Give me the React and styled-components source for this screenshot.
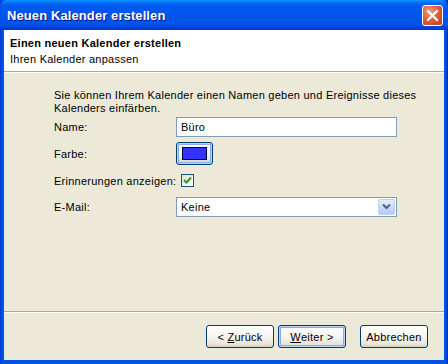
import styled, { createGlobalStyle } from "styled-components";

const GlobalStyle = createGlobalStyle`
    html, body {
        margin: 0;
        padding: 0;
        background: #0a246a;
    }
    * {
        box-sizing: border-box;
    }
`;

export default function App() {
    return (
        <Window>
            <GlobalStyle />
            <TitleBar>
                <Title>Neuen Kalender erstellen</Title>
                <CloseButton>
                    <svg width="13" height="13" viewBox="0 0 13 13">
                        <path d="M2 2 L11 11 M11 2 L2 11" stroke="#fff" strokeWidth="2.2" strokeLinecap="square" />
                    </svg>
                </CloseButton>
            </TitleBar>
            <Client>
                <Header>
                    <HeaderTitle>Einen neuen Kalender erstellen</HeaderTitle>
                    <HeaderSub>Ihren Kalender anpassen</HeaderSub>
                </Header>
                <Body>
                    <Description>
                        Sie können Ihrem Kalender einen Namen geben und Ereignisse dieses
                        <br />
                        Kalenders einfärben.
                    </Description>
                    <Form>
                        <Row $h={21}>
                            <Label>Name:</Label>
                            <TextInput>Büro</TextInput>
                        </Row>
                        <Row $h={23}>
                            <Label>Farbe:</Label>
                            <ColorButton>
                                <Swatch $color="#3333ff" />
                            </ColorButton>
                        </Row>
                        <Row $h={21}>
                            <Label>Erinnerungen anzeigen:</Label>
                            <CheckBox>
                                <svg width="9" height="9" viewBox="0 0 9 9">
                                    <path d="M1 4 L3.5 6.5 L8 1.5" stroke="#21a121" strokeWidth="2" fill="none" />
                                </svg>
                            </CheckBox>
                        </Row>
                        <Row $h={21}>
                            <Label>E-Mail:</Label>
                            <Select>
                                <span>Keine</span>
                                <DropButton>
                                    <svg width="9" height="7" viewBox="0 0 9 7">
                                        <path d="M1 1.5 L4.5 5 L8 1.5" stroke="#4d6185" strokeWidth="2" fill="none" />
                                    </svg>
                                </DropButton>
                            </Select>
                        </Row>
                    </Form>
                </Body>
                <Footer>
                    <Button>
                        {"< "}
                        <u>Z</u>urück
                    </Button>
                    <Button $default>
                        <u>W</u>eiter {">"}
                    </Button>
                    <Button $gap={14}>Abbrechen</Button>
                </Footer>
            </Client>
        </Window>
    );
}

const Window = styled.div`
    width: 448px;
    height: 364px;
    display: flex;
    flex-direction: column;
    background: linear-gradient(90deg, #0831d9 0, #0054e3 2px, #0054e3 446px, #001ea0 448px);
    font-family: Tahoma, "Liberation Sans", Arial, sans-serif;
    font-size: 11px;
    letter-spacing: 0.25px;
    color: #000;
    overflow: hidden;
`;

const TitleBar = styled.div`
    height: 30px;
    flex-shrink: 0;
    display: flex;
    align-items: center;
    justify-content: space-between;
    padding: 0 5px 0 7px;
    border-radius: 7px 7px 0 0;
    background: linear-gradient(
        180deg,
        #0997ff 0,
        #0a6af8 3px,
        #0058ee 6px,
        #0055eb 18px,
        #0053e6 24px,
        #0040d8 28px,
        #0036cc 30px
    );
`;

const Title = styled.div`
    font-family: "Trebuchet MS", "Liberation Sans", sans-serif;
    font-weight: bold;
    font-size: 13px;
    letter-spacing: 0.1px;
    color: #fff;
    text-shadow: 1px 1px 0 #0f1089;
    padding-top: 1px;
`;

const CloseButton = styled.div`
    width: 21px;
    height: 21px;
    display: flex;
    align-items: center;
    justify-content: center;
    border: 1px solid #fff;
    border-radius: 3px;
    background: radial-gradient(circle at 35% 30%, #f0a080 0, #e06040 45%, #c0391b 100%);
    margin-top: 1px;
`;

const Client = styled.div`
    flex: 1;
    display: flex;
    flex-direction: column;
    margin: 0 4px 4px 4px;
    background: #ece9d8;
`;

const Header = styled.div`
    height: 42px;
    flex-shrink: 0;
    background: #fff;
    padding: 5px 6px 0;
    border-bottom: 1px solid #aca899;
    box-shadow: 0 1px 0 #fff;
`;

const HeaderTitle = styled.div`
    font-weight: bold;
    line-height: 16px;
`;

const HeaderSub = styled.div`
    line-height: 16px;
`;

const Body = styled.div`
    flex: 1;
    padding: 17px 0 0 50px;
`;

const Description = styled.div`
    line-height: 13px;
    margin-bottom: 1px;
    white-space: nowrap;
`;

const Form = styled.div`
    display: flex;
    flex-direction: column;
    gap: 5px;
`;

const Row = styled.div`
    display: flex;
    align-items: center;
    height: ${(p) => p.$h}px;
`;

const Label = styled.div`
    width: 122px;
    flex-shrink: 0;
    white-space: nowrap;
`;

const TextInput = styled.div`
    width: 221px;
    height: 20px;
    border: 1px solid #7f9db9;
    background: #fff;
    padding: 0 4px;
    display: flex;
    align-items: center;
`;

const ColorButton = styled.div`
    width: 37px;
    height: 23px;
    border: 1px solid #003c74;
    border-radius: 3px;
    background: linear-gradient(180deg, #fff 0, #f4f3ee 60%, #d6d0c5 100%);
    box-shadow: inset 0 0 0 1px #bdd0f8, inset 0 0 0 2px #89adeb;
    display: flex;
    align-items: center;
    justify-content: center;
`;

const Swatch = styled.div`
    width: 25px;
    height: 13px;
    background: ${(p) => p.$color};
    border: 1px solid #000040;
`;

const CheckBox = styled.div`
    width: 13px;
    height: 13px;
    margin-left: 5px;
    border: 1px solid #1c5180;
    background: linear-gradient(135deg, #dcdcd7 0, #fff 100%);
    display: flex;
    align-items: center;
    justify-content: center;
`;

const Select = styled.div`
    width: 221px;
    height: 20px;
    border: 1px solid #7f9db9;
    background: #fff;
    padding: 0 1px 0 4px;
    display: flex;
    align-items: center;
    justify-content: space-between;
`;

const DropButton = styled.div`
    width: 17px;
    height: 16px;
    border-radius: 2px;
    border: 1px solid #bdd0f8;
    background: linear-gradient(180deg, #e6eefc 0, #c8d7f8 60%, #b4c8f5 100%);
    display: flex;
    align-items: center;
    justify-content: center;
`;

const Footer = styled.div`
    height: 49px;
    flex-shrink: 0;
    border-top: 1px solid #aca899;
    box-shadow: inset 0 1px 0 #fff;
    display: flex;
    justify-content: flex-end;
    align-items: flex-start;
    padding: 13px 16px 0 0;
`;

const Button = styled.div`
    width: 68px;
    height: 23px;
    margin-left: ${(p) => (p.$gap ? p.$gap : 4)}px;
    border: 1px solid #003c74;
    border-radius: 3px;
    background: linear-gradient(180deg, #fff 0, #f5f4ef 55%, #e8e5d9 85%, #d6d0c5 100%);
    box-shadow: ${(p) =>
        p.$default ? "inset 0 0 0 1px #c1d3fb, inset 0 0 0 2px #8daaf0" : "none"};
    display: flex;
    align-items: center;
    justify-content: center;
    white-space: pre;
    u {
        text-decoration: underline;
    }
`;
